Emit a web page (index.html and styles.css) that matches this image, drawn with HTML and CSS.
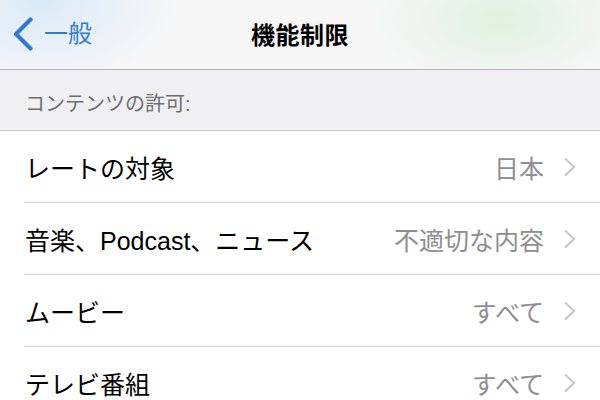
FILE: index.html
```html
<!DOCTYPE html>
<html lang="ja">
<head>
    <meta charset="UTF-8">
    <meta name="viewport" content="width=device-width, initial-scale=1.0">
    <title>機能制限</title>
    <link rel="stylesheet" href="styles.css">
</head>
<body>

<header class="navbar">
    <a class="back" href="#">
        <svg class="back-icon" width="22" height="34" viewBox="0 0 22 34">
            <path d="M18.5 2.5 L4 17 L18.5 31.5" fill="none" stroke="#2f7bd1" stroke-width="4.2" stroke-linecap="round" stroke-linejoin="round"/>
        </svg>
        <span>一般</span>
    </a>
    <div class="title">機能制限</div>
</header>

<main>
    <div class="group-header">コンテンツの許可:</div>
    <ul class="list">
        <li class="row">
            <div class="row-inner">
                <span class="label">レートの対象</span>
                <span class="value">日本</span>
                <svg class="chevron" width="13" height="20" viewBox="0 0 13 20"><path d="M2 1.5 L11 10 L2 18.5" fill="none" stroke="#c7c7cc" stroke-width="2.2"/></svg>
            </div>
        </li>
        <li class="row">
            <div class="row-inner">
                <span class="label">音楽、Podcast、ニュース</span>
                <span class="value">不適切な内容</span>
                <svg class="chevron" width="13" height="20" viewBox="0 0 13 20"><path d="M2 1.5 L11 10 L2 18.5" fill="none" stroke="#c7c7cc" stroke-width="2.2"/></svg>
            </div>
        </li>
        <li class="row">
            <div class="row-inner">
                <span class="label">ムービー</span>
                <span class="value">すべて</span>
                <svg class="chevron" width="13" height="20" viewBox="0 0 13 20"><path d="M2 1.5 L11 10 L2 18.5" fill="none" stroke="#c7c7cc" stroke-width="2.2"/></svg>
            </div>
        </li>
        <li class="row">
            <div class="row-inner">
                <span class="label">テレビ番組</span>
                <span class="value">すべて</span>
                <svg class="chevron" width="13" height="20" viewBox="0 0 13 20"><path d="M2 1.5 L11 10 L2 18.5" fill="none" stroke="#c7c7cc" stroke-width="2.2"/></svg>
            </div>
        </li>
    </ul>
</main>

</body>
</html>
```

FILE: styles.css
```css
/* 基本 */
body {
    margin: 0;
    padding: 0;
    font-family: "Liberation Sans", "Noto Sans CJK JP", sans-serif;
    background-color: #efeff4;
    color: #000;
    width: 600px;
    overflow: hidden;
}
.navbar {
    position: relative;
    height: 69px;
    border-bottom: 1px solid #b4b4b8;
    background:
        radial-gradient(ellipse 140px 90px at 40px 0px, rgba(215, 232, 248, 0.9), rgba(215, 232, 248, 0)),
        radial-gradient(ellipse 130px 70px at 500px 20px, rgba(222, 240, 222, 0.9), rgba(222, 240, 222, 0)),
        #f7f7f8;
    display: flex;
    align-items: center;
    justify-content: center;
}
.back {
    position: absolute;
    left: 12px;
    top: 17px;
    display: flex;
    align-items: center;
    color: #2f7bd1;
    text-decoration: none;
    font-size: 24px;
}
.back span {
    margin-left: 10px;
    line-height: 34px;
}
.title {
    font-size: 24px;
    font-weight: bold;
    letter-spacing: 0.5px;
    margin-top: -2px;
}
.group-header {
    height: 60px;
    box-sizing: border-box;
    padding: 21px 0 0 25px;
    font-size: 20px;
    line-height: 26px;
    color: #6d6d72;
}
.list {
    list-style: none;
    margin: 0;
    padding: 0;
    background-color: #fff;
    border-top: 1px solid #c8c7cc;
}
.row {
    padding-left: 24px;
}
.row-inner {
    height: 71px;
    border-bottom: 1px solid #d6d6da;
    display: flex;
    align-items: center;
    padding-right: 24px;
    font-size: 25px;
}
.label {
    flex: 1;
    margin-left: 1px;
}
.value {
    color: #8e8e93;
    margin-right: 19px;
}
.chevron {
    display: block;
}
```
